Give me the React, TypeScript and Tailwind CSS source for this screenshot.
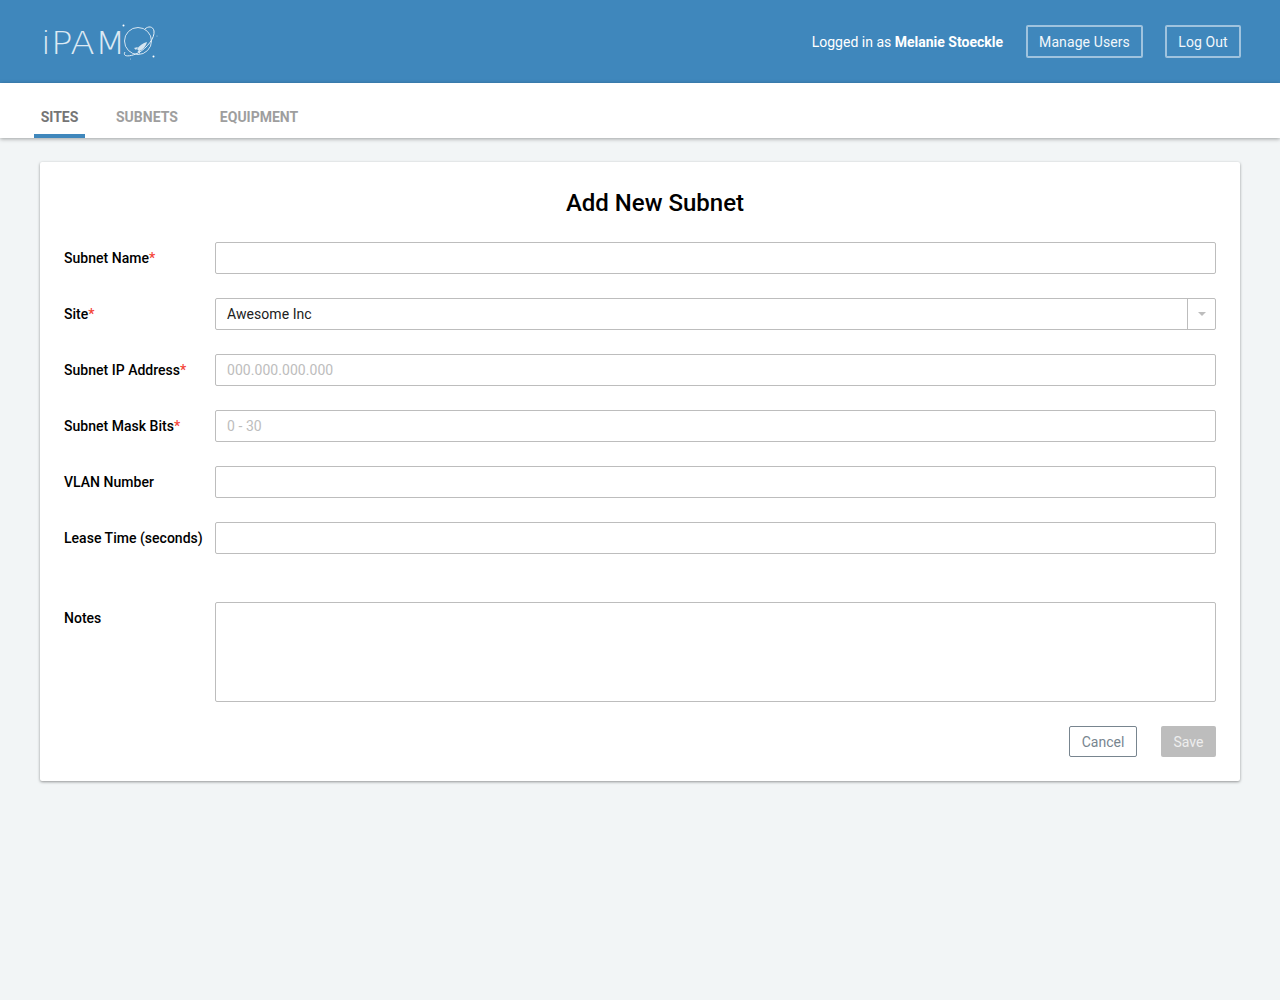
import React from "react";

const fields = [
  { label: "Subnet Name", required: true, placeholder: "" },
  { label: "Site", required: true, value: "Awesome Inc", select: true },
  { label: "Subnet IP Address", required: true, placeholder: "000.000.000.000" },
  { label: "Subnet Mask Bits", required: true, placeholder: "0 - 30" },
  { label: "VLAN Number", required: false, placeholder: "" },
  { label: "Lease Time (seconds)", required: false, placeholder: "" },
];

// planet + rocket part of the logo
const LogoMark = () => (
  <svg width="36" height="38" viewBox="0 0 36 38" fill="none" className="shrink-0">
    <circle cx="16" cy="18" r="13.5" stroke="#d5e5f1" strokeWidth="1" />
    <path d="M3 29 C 0 34 8 34 16 30 C 25 25 33 15 32 8 C 31 3 26 3 23 6" stroke="#e6f0f7" strokeWidth="1" />
    <path d="M25 19 C 21 20 17 23 15 26 L 17 28 C 21 27 24 23 25 19 Z" fill="#d5e5f1" />
    <path d="M16 24 L12 25 L14 27 Z M18 27 L18 31 L15.5 28.5 Z" fill="#d5e5f1" />
    <circle cx="1.5" cy="2.5" r="1" fill="#ffffff" />
    <circle cx="31.5" cy="33.5" r="1" fill="#ffffff" />
    <circle cx="8.5" cy="36" r="0.5" fill="#bcd6ea" />
    <circle cx="35" cy="13" r="0.5" fill="#bcd6ea" />
  </svg>
);

const Field = ({ label, required, placeholder, value, select }: any) => (
  <div className="flex h-8 items-center">
    <label className="w-[151px] shrink-0 text-sm font-medium tracking-[0.02px] text-black">
      {label}
      {required && <span className="text-[#f44336]">*</span>}
    </label>
    <div className="flex h-8 flex-1 items-center rounded-[2px] border border-[#bdbdbd] bg-white">
      <span className={`flex-1 pl-[11px] text-sm tracking-[0.05px] ${value ? "text-[#212121]" : "text-[#bdbdbd]"}`}>
        {value || placeholder}
      </span>
      {select && (
        <span className="flex h-full w-[28px] items-center justify-center border-l border-[#bdbdbd]">
          <span className="h-0 w-0 border-x-[4px] border-t-[4px] border-x-transparent border-t-[#bdbdbd]" />
        </span>
      )}
    </div>
  </div>
);

export default function App() {
  return (
    <div className="min-h-[1000px] bg-[#f2f5f6] font-['Roboto',sans-serif]">
      <header className="flex h-[83px] items-center justify-between bg-[#3f87bc] pl-[41px] pr-[39px]">
        <div className="flex items-center">
          <span className="inline-block w-[81px] origin-left scale-x-[1.12] pt-[2px] font-['DejaVu_Sans',sans-serif] text-[32px] font-extralight leading-none text-[#dce9f3]">
            iPAM
          </span>
          <LogoMark />
        </div>
        <div className="flex items-center text-sm text-white">
          <span className="mr-[23px]">
            Logged in as <span className="font-bold">Melanie Stoeckle</span>
          </span>
          <button className="mr-[22px] h-[33px] w-[117px] rounded-[2px] border-2 border-[#9fc3de] tracking-[0.1px] text-[#f2f7fb]">
            Manage Users
          </button>
          <button className="h-[33px] w-[76px] rounded-[2px] border-2 border-[#9fc3de] tracking-[0.1px] text-[#f2f7fb]">
            Log Out
          </button>
        </div>
      </header>

      <nav className="flex h-[55px] items-end bg-white pl-[34px] shadow-[0_1px_4px_rgba(0,0,0,0.35)]">
        <a className="flex h-[31px] w-[51px] justify-center border-b-4 border-[#3f87bc] text-sm font-bold text-[#757575]">
          SITES
        </a>
        <a className="ml-[31px] flex h-[31px] text-sm font-bold text-[#9e9e9e]">SUBNETS</a>
        <a className="ml-[42px] flex h-[31px] text-sm font-bold text-[#9e9e9e]">EQUIPMENT</a>
      </nav>

      <main className="px-10 pt-6">
        <div className="rounded-[2px] bg-white px-6 pb-6 pt-[26px] shadow-[0_1px_3px_rgba(0,0,0,0.4)]">
          <h1 className="mb-[23px] h-[31px] pl-[30px] text-center text-2xl font-medium leading-[31px] text-black">
            Add New Subnet
          </h1>
          <div className="flex flex-col gap-6">
            {fields.map((f) => (
              <Field key={f.label} {...f} />
            ))}
          </div>
          <div className="mt-12 flex">
            <label className="w-[151px] shrink-0 pt-1.5 text-sm font-medium tracking-[0.02px] text-black">Notes</label>
            <div className="h-[100px] flex-1 rounded-[2px] border border-[#bdbdbd]" />
          </div>
          <div className="mt-6 flex justify-end gap-6">
            <button className="h-[31px] w-[68px] rounded-[2px] border border-[#78858f] text-sm text-[#78858f]">Cancel</button>
            <button className="h-[31px] w-[55px] rounded-[2px] bg-[#bdbdbd] text-sm text-[#eeeeee]">Save</button>
          </div>
        </div>
      </main>
    </div>
  );
}
